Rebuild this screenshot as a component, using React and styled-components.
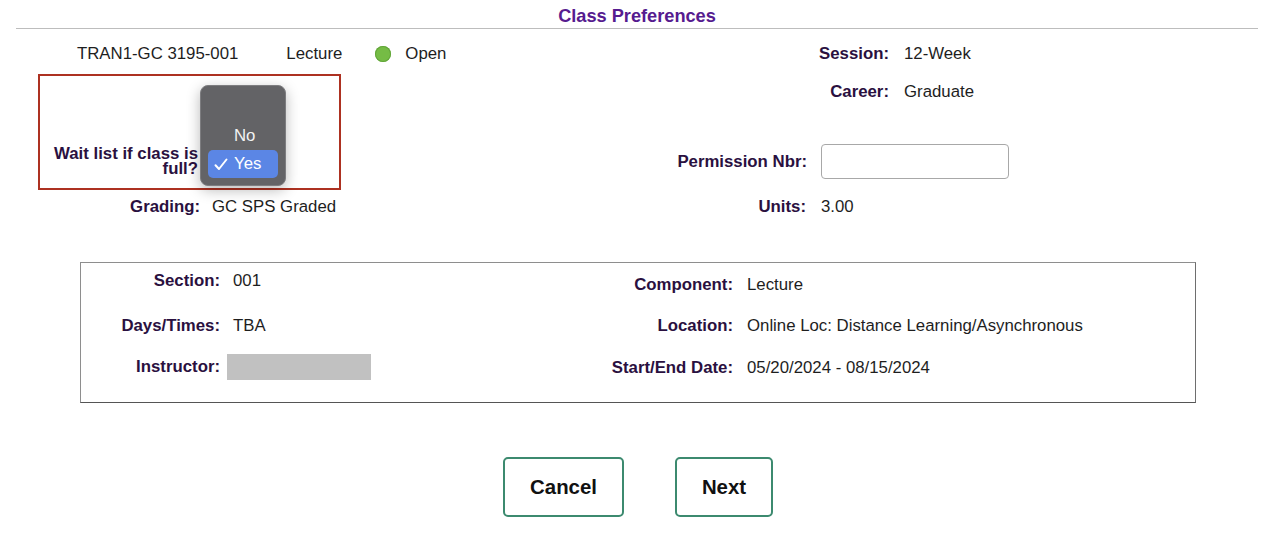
import React from 'react';
import styled, { createGlobalStyle } from 'styled-components';

const GlobalStyle = createGlobalStyle`
    body {
        margin: 0;
        background: #fff;
        font-family: "Liberation Sans", Arial, Helvetica, sans-serif;
        font-size: 16.8px;
        color: #1e1e1e;
    }
`;

const Page = styled.div`
    padding: 0 22px 40px 16px;
`;

const Title = styled.h1`
    margin: 0;
    padding: 6px 0 2px;
    text-align: center;
    font-size: 18.2px;
    line-height: 20px;
    font-weight: bold;
    color: #561b8f;
    border-bottom: 1px solid #bdbdbd;
`;

const Top = styled.div`
    display: grid;
    grid-template-columns: 624px 1fr;
`;

const Column = styled.div`
    display: flex;
    flex-direction: column;
`;

const InfoRow = styled.div`
    display: flex;
    align-items: center;
    margin-top: 16px;
    padding-left: 61px;
    line-height: 18px;
`;

const Lecture = styled.span`
    margin-left: 48px;
`;

const Dot = styled.span`
    width: 16px;
    height: 16px;
    margin-left: 33px;
    margin-right: 14px;
    border-radius: 50%;
    background: #75bc45;
    box-shadow: inset 0 0 0 1px #62a53a;
`;

const WaitBox = styled.div`
    position: relative;
    box-sizing: border-box;
    width: 303px;
    height: 116px;
    margin: 11px 0 0 22px;
    padding-bottom: 12px;
    border: 2px solid #ad3121;
    display: flex;
    align-items: flex-end;
`;

const WaitLabel = styled.label`
    width: 153px;
    margin-left: 5px;
    text-align: right;
    font-weight: bold;
    line-height: 15px;
    color: #2a1040;
`;

const Popup = styled.div`
    position: absolute;
    left: 160px;
    top: 9px;
    box-sizing: border-box;
    width: 86px;
    height: 101px;
    padding: 0 7px 7px;
    display: flex;
    flex-direction: column;
    justify-content: flex-end;
    background: #636366;
    border: 1px solid #7d7d80;
    border-radius: 8px;
    box-shadow: 0 4px 14px rgba(0, 0, 0, 0.28);
`;

const Option = styled.div`
    display: flex;
    align-items: center;
    height: 28px;
    border-radius: 5px;
    color: ${p => (p.$selected ? '#fff' : '#f2f2f2')};
    background: ${p => (p.$selected ? '#5b86e5' : 'transparent')};
`;

const Check = styled.span`
    width: 26px;
    display: flex;
    justify-content: center;
`;

const Field = styled.div`
    display: flex;
    align-items: center;
    margin-top: ${p => p.$mt || 0}px;
    line-height: 18px;
`;

const Label = styled.span`
    flex: 0 0 ${p => p.$w}px;
    text-align: right;
    font-weight: bold;
    color: #2a1040;
`;

const Value = styled.span`
    margin-left: ${p => p.$gap || 14}px;
`;

const PermInput = styled.input`
    box-sizing: border-box;
    width: 188px;
    height: 35px;
    margin-left: 14px;
    border: 1px solid #a8a8a8;
    border-radius: 4px;
    background: #fff;
    font: inherit;
    padding: 0 8px;
    outline: none;
`;

const DetailBox = styled.div`
    box-sizing: border-box;
    width: 1116px;
    height: 141px;
    margin: 46px 0 0 64px;
    padding-top: 9px;
    display: flex;
    border: 1px solid #8e8e8e;
    border-bottom-color: #555;
    border-right-color: #6e6e6e;
`;

const DetailCol = styled.div`
    display: flex;
    flex-direction: column;
    flex: 0 0 ${p => p.$w || 'auto'};
`;

const Redacted = styled.span`
    width: 144px;
    height: 26px;
    margin-left: 7px;
    background: #c1c1c1;
`;

const Actions = styled.div`
    display: flex;
    justify-content: center;
    gap: 51px;
    margin-top: 54px;
    padding-left: 2px;
`;

const Button = styled.button`
    box-sizing: border-box;
    width: ${p => p.$w}px;
    height: 60px;
    background: #fff;
    border: 2px solid #3c8a6f;
    border-radius: 5px;
    font-family: inherit;
    font-size: 20.4px;
    font-weight: bold;
    color: #111;
    cursor: pointer;
`;

const CheckIcon = () => (
    <svg width="14" height="13" viewBox="0 0 14 13">
        <path d="M1.5 7.2 L5 11 L12.5 1.5" fill="none" stroke="#fff" strokeWidth="2" strokeLinecap="round" strokeLinejoin="round" />
    </svg>
);

const App = () => {
    return (
        <>
            <GlobalStyle />
            <Page>
                <Title>Class Preferences</Title>
                <Top>
                    <Column>
                        <InfoRow>
                            <span>TRAN1-GC 3195-001</span>
                            <Lecture>Lecture</Lecture>
                            <Dot />
                            <span>Open</span>
                        </InfoRow>
                        <WaitBox>
                            <WaitLabel>Wait list if class is full?</WaitLabel>
                            <Popup>
                                <Option>
                                    <Check />
                                    No
                                </Option>
                                <Option $selected>
                                    <Check><CheckIcon /></Check>
                                    Yes
                                </Option>
                            </Popup>
                        </WaitBox>
                        <Field $mt={8}>
                            <Label $w={184}>Grading:</Label>
                            <Value $gap={12}>GC SPS Graded</Value>
                        </Field>
                    </Column>
                    <Column>
                        <Field $mt={16}>
                            <Label $w={249}>Session:</Label>
                            <Value $gap={15}>12-Week</Value>
                        </Field>
                        <Field $mt={20}>
                            <Label $w={249}>Career:</Label>
                            <Value $gap={15}>Graduate</Value>
                        </Field>
                        <Field $mt={43}>
                            <Label $w={167}>Permission Nbr:</Label>
                            <PermInput type="text" />
                        </Field>
                        <Field $mt={19}>
                            <Label $w={166}>Units:</Label>
                            <Value $gap={15}>3.00</Value>
                        </Field>
                    </Column>
                </Top>

                <DetailBox>
                    <DetailCol $w="510px">
                        <Field>
                            <Label $w={139}>Section:</Label>
                            <Value $gap={13}>001</Value>
                        </Field>
                        <Field $mt={27}>
                            <Label $w={139}>Days/Times:</Label>
                            <Value $gap={13}>TBA</Value>
                        </Field>
                        <Field $mt={19}>
                            <Label $w={139}>Instructor:</Label>
                            <Redacted />
                        </Field>
                    </DetailCol>
                    <DetailCol>
                        <Field $mt={4}>
                            <Label $w={142}>Component:</Label>
                            <Value>Lecture</Value>
                        </Field>
                        <Field $mt={23}>
                            <Label $w={142}>Location:</Label>
                            <Value>Online Loc: Distance Learning/Asynchronous</Value>
                        </Field>
                        <Field $mt={24}>
                            <Label $w={142}>Start/End Date:</Label>
                            <Value>05/20/2024 - 08/15/2024</Value>
                        </Field>
                    </DetailCol>
                </DetailBox>

                <Actions>
                    <Button $w={121}>Cancel</Button>
                    <Button $w={98}>Next</Button>
                </Actions>
            </Page>
        </>
    );
};

export default App;
